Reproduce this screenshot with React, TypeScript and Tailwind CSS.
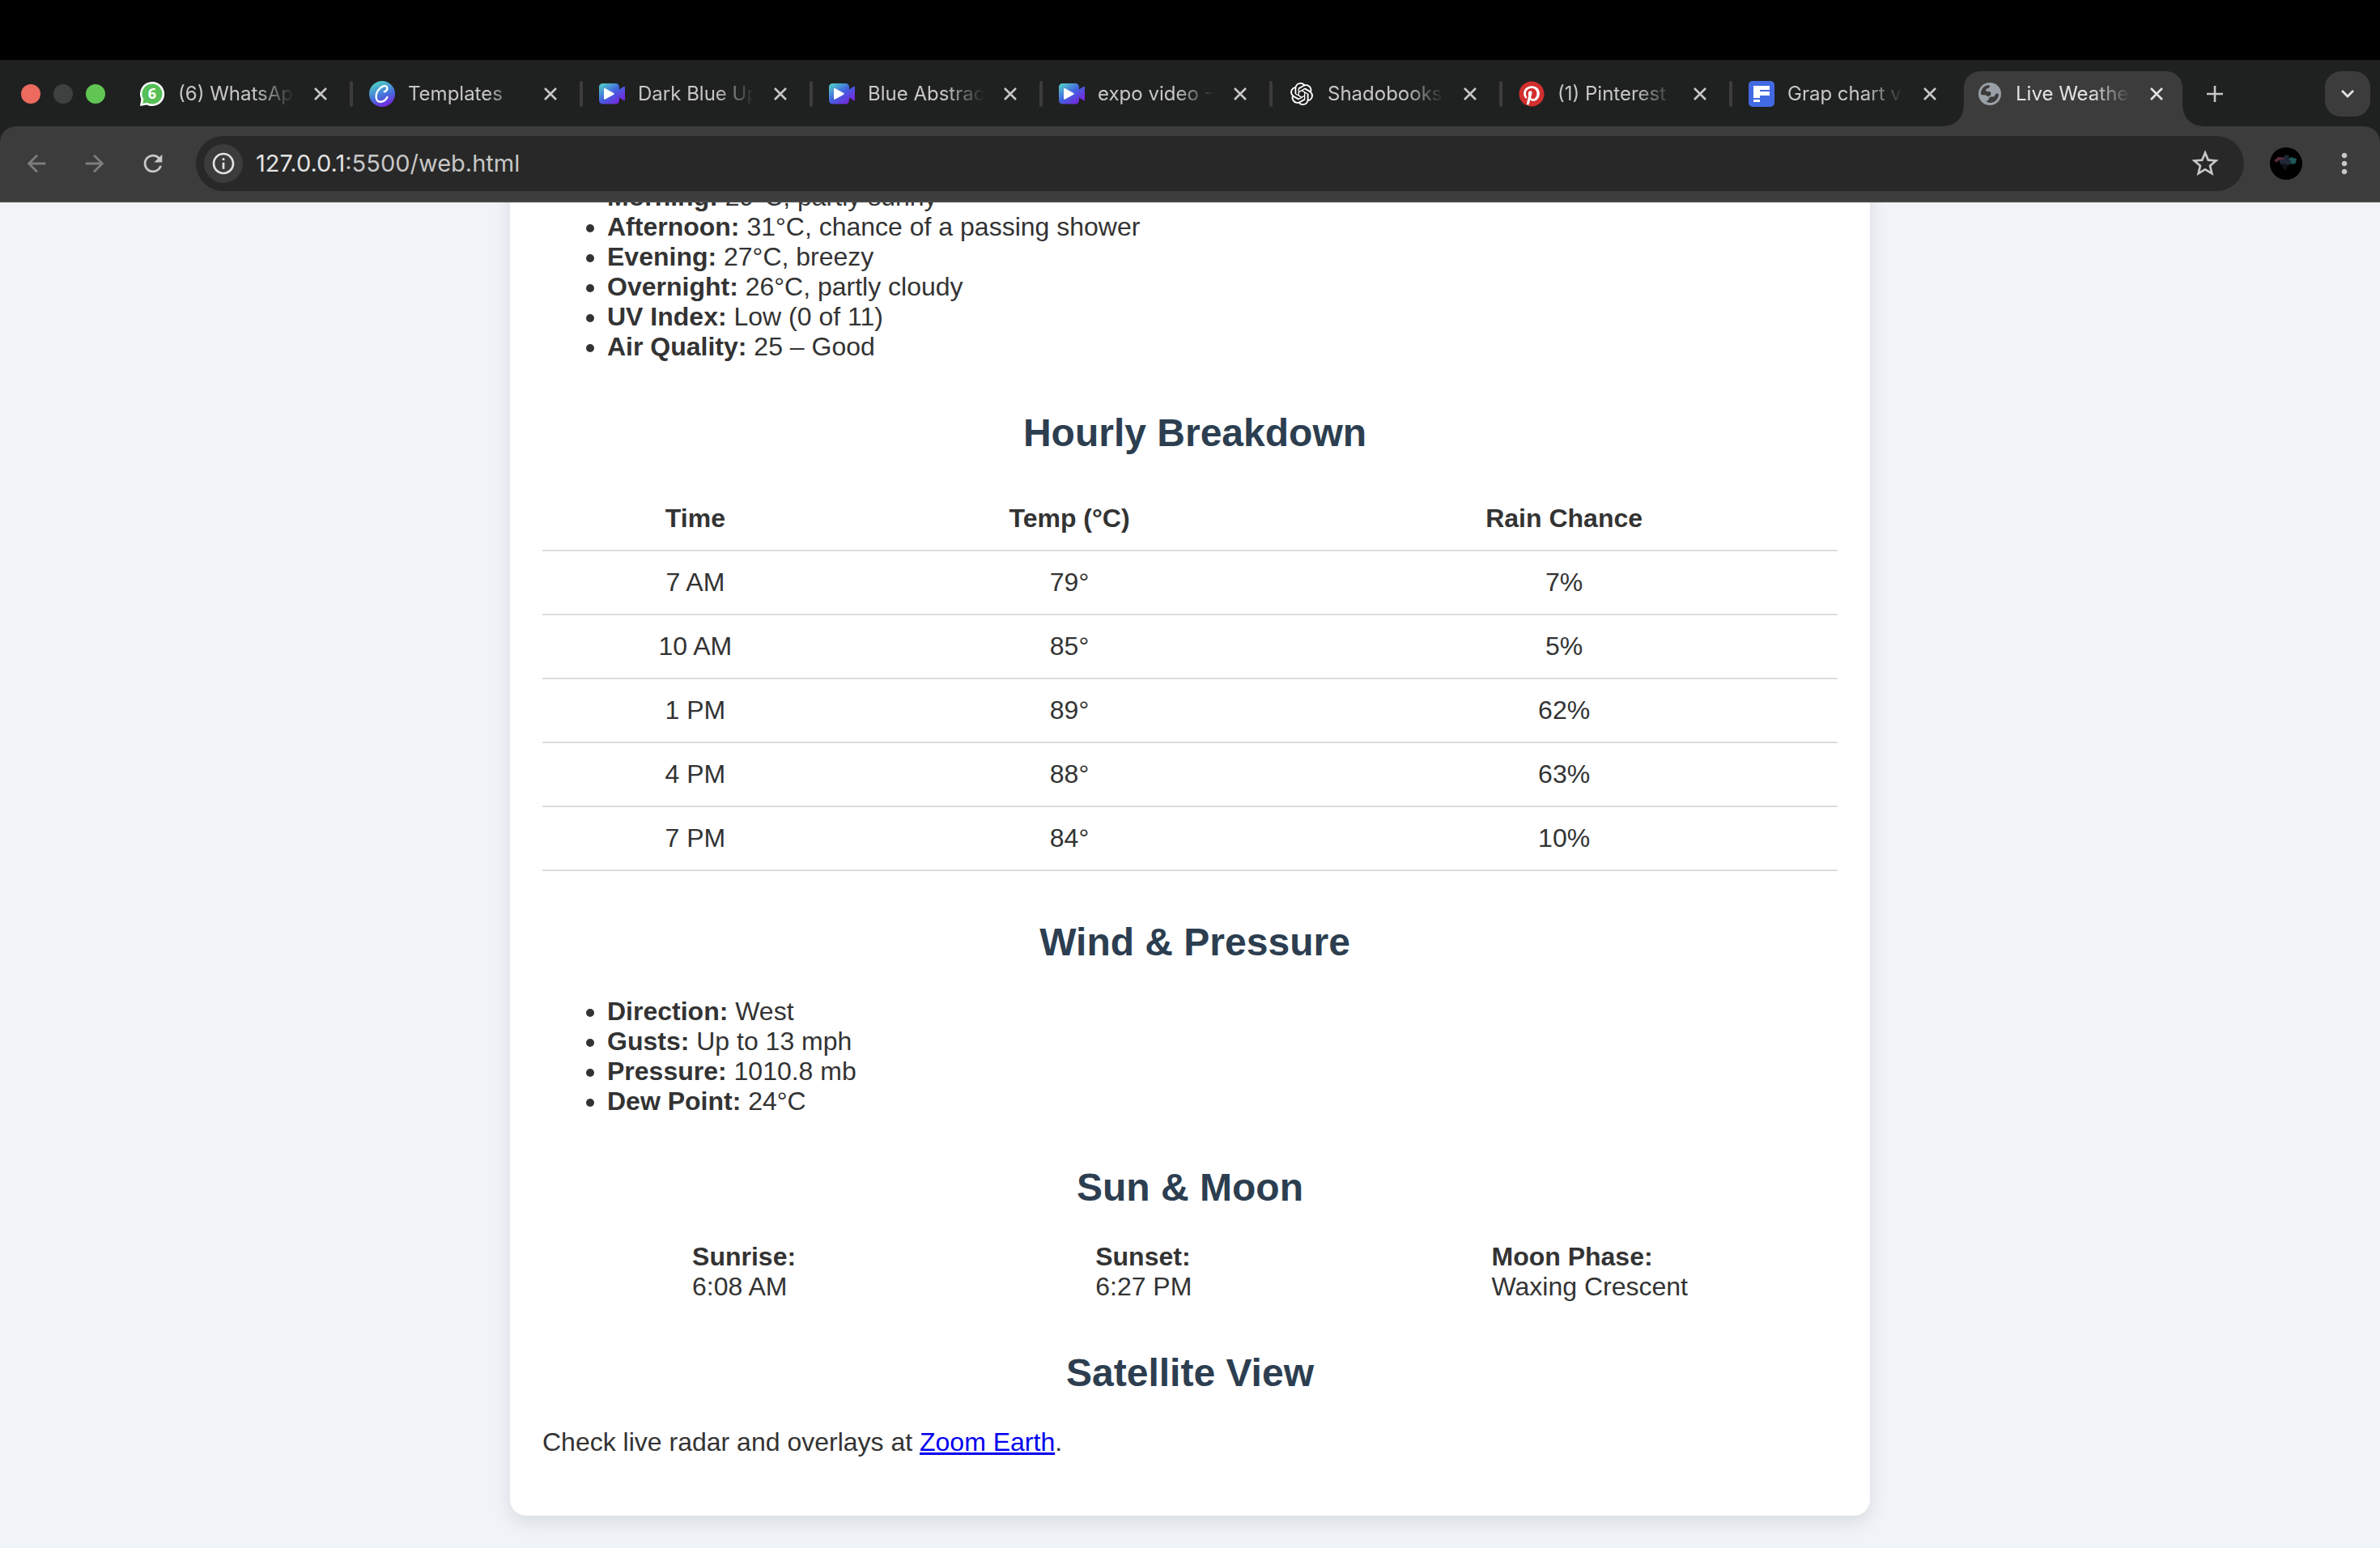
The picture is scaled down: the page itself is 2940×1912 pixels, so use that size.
import React from "react";
import { SiOpenai } from "react-icons/si";
import { FaPinterest } from "react-icons/fa";
import { MdArrowBack, MdArrowForward, MdRefresh, MdInfoOutline, MdStarBorder, MdMoreVert } from "react-icons/md";

function WhatsAppIcon() {
  return (
    <svg viewBox="0 0 32 32" className="size-8" aria-hidden="true">
      <path d="M16 1a15 15 0 1 1-6.6 28.4L1 31l1.400-8.600A15 15 0 0 1 16 1z" fill="#fff" />
      <path d="M16 3.600a12.400 12.400 0 1 1-6.200 23.100L4.200 28l1.100-5.600A12.400 12.400 0 0 1 16 3.600z" fill="#57bf57" />
      <text x="16" y="22" textAnchor="middle" fontSize="18" fontWeight="700" fontFamily="Open Sans, sans-serif" fill="#fff">6</text>
    </svg>
  );
}

function CanvaIcon() {
  return (
    <svg viewBox="0 0 32 32" className="size-8" aria-hidden="true">
      <defs>
        <linearGradient id="canva" x1="0.3" y1="0" x2="0.7" y2="1">
          <stop offset="0.1" stopColor="#4fc1c9" />
          <stop offset="0.55" stopColor="#4472dc" />
          <stop offset="1" stopColor="#7a1fe0" />
        </linearGradient>
      </defs>
      <circle cx="16" cy="16" r="16" fill="url(#canva)" />
      <path
        d="M18.800 13.200c2.200-.4 4.200-3 3.400-5.300C21.400 5.700 18.600 5.700 16 7.100 11.500 9.500 8.600 14.600 8.600 19.400c0 3.700 2 6.300 5.200 6.300 3.600 0 6.800-2.400 8.600-5.600"
        fill="none"
        stroke="#fff"
        strokeWidth="2.400"
        strokeLinecap="round"
      />
    </svg>
  );
}

function VideoIcon() {
  return (
    <svg viewBox="0 0 32 32" className="size-8" aria-hidden="true">
      <defs>
        <linearGradient id="video" x1="0" y1="0" x2="0.9" y2="1">
          <stop offset="0.1" stopColor="#4fc3ca" />
          <stop offset="0.5" stopColor="#4361e0" />
          <stop offset="0.9" stopColor="#7527dc" />
        </linearGradient>
      </defs>
      <path
        d="M4.500 3h16a4.500 4.500 0 0 1 4.500 4.500v3l5.800-3.700q1.200-.5 1.200.7v16q0 1.200-1.200.7L25 20.500v3.500a4.500 4.500 0 0 1-4.500 4.500h-16A4.500 4.500 0 0 1 0 24V7.500A4.500 4.500 0 0 1 4.500 3z"
        fill="url(#video)"
      />
      <path d="M6 10.300q0-2 1.800-1L18.200 15q1.200.8 0 1.700l-10.400 5.800q-1.800 1-1.800-1z" fill="#fff" />
    </svg>
  );
}

function OpenAiIcon() {
  return <SiOpenai className="size-7 text-white" />;
}

function PinterestIcon() {
  return (
    <span className="flex size-8 items-center justify-center rounded-full bg-[radial-gradient(circle,#ffffff_14px,transparent_15px)]">
      <FaPinterest className="size-8 text-[#d22f2f]" />
    </span>
  );
}

function FlourishIcon() {
  return (
    <svg viewBox="0 0 32 32" className="size-8" aria-hidden="true">
      <rect width="32" height="32" rx="5" fill="#4169e1" />
      <path d="M6 6h20v5H14v2h12v5H14v3H6z" fill="#fff" />
      <rect x="6" y="23" width="8" height="3" fill="#fff" />
    </svg>
  );
}

function GlobeIcon() {
  return (
    <svg viewBox="0 0 28 28" className="size-7" aria-hidden="true">
      <circle cx="14" cy="14" r="14" fill="#9aa0a8" />
      <path
        d="M3 15C2.400 8.500 6.500 3.800 12.600 3.100L14 4.200C13.500 6.500 12 7.200 10.500 7.600 8.500 8.400 8.800 10.800 10.600 11h3.200c1.800.6 2 3 1.200 4.600L12.200 17.400 9 15.400z"
        fill="#3c3c3c"
      />
      <path
        d="M9.600 23.200l2.600-1.600c.6-1.800 1-3.200 3-4.200h3.600c1.600-.4 1.400-2.600 2.600-3.400 1.400-.7 2.500-.6 3.500 0 .2 5-3.600 9.800-8.300 10.800-2.500.5-5 .1-7-1.600z"
        fill="#3c3c3c"
      />
    </svg>
  );
}

function CloseIcon() {
  return (
    <svg viewBox="0 0 16 16" className="size-4" fill="none" stroke="currentColor" strokeWidth="2.600" aria-hidden="true">
      <path d="M1 1l14 14M15 1L1 15" />
    </svg>
  );
}

type Tab = { title: string; icon: () => React.ReactElement; active?: boolean };

const tabs: Tab[] = [
  { title: "(6) WhatsApp", icon: WhatsAppIcon },
  { title: "Templates", icon: CanvaIcon },
  { title: "Dark Blue Upload", icon: VideoIcon },
  { title: "Blue Abstract", icon: VideoIcon },
  { title: "expo video - Video", icon: VideoIcon },
  { title: "Shadobooks", icon: OpenAiIcon },
  { title: "(1) Pinterest", icon: PinterestIcon },
  { title: "Grap chart video", icon: FlourishIcon },
  { title: "Live Weather", icon: GlobeIcon, active: true },
];

function TabItem({ tab, divider }: { tab: Tab; divider: boolean }) {
  const Icon = tab.icon;
  return (
    <div
      className={
        tab.active
          ? "relative ml-0.5 flex h-[68px] min-w-0 max-w-[270px] flex-1 rounded-t-[20px] bg-[#3c3c3c] pb-3 text-[#e3e3e3]"
          : "flex h-14 min-w-0 max-w-[284px] flex-1 text-[#c7c7c7]"
      }
    >
      {tab.active && (
        <>
          <span className="absolute -left-6 bottom-0 size-6 bg-[radial-gradient(circle_at_0_0,#1f2120_23px,#3c3c3c_24px)]" />
          <span className="absolute -right-6 bottom-0 size-6 bg-[radial-gradient(circle_at_100%_0,#1f2120_23px,#3c3c3c_24px)]" />
        </>
      )}
      <div className={tab.active ? "flex min-w-0 flex-1 items-center pl-4 pr-3" : "flex min-w-0 flex-1 items-center pl-5 pr-4"}>
        <span className="flex size-8 shrink-0 items-center justify-center">
          <Icon />
        </span>
        <span className="ml-4 mr-3 min-w-0 flex-1 overflow-hidden whitespace-nowrap text-[24px] leading-8 [mask-image:linear-gradient(to_right,black_calc(100%-48px),transparent)]">
          {tab.title}
        </span>
        <button type="button" aria-label={"Close " + tab.title} className="flex size-10 shrink-0 items-center justify-center">
          <CloseIcon />
        </button>
      </div>
      {!tab.active && <span className={divider ? "h-8 w-1 self-center rounded-sm bg-[#3c3c3c]" : "w-1"} />}
    </div>
  );
}

function TabStrip() {
  return (
    <div className="flex bg-[#1f2120] pt-3.5">
      <div className="flex h-14 shrink-0 items-center gap-4 pl-[26px] pr-[22px]">
        <button type="button" aria-label="Close window" className="size-6 rounded-full bg-[#ed6a5e]" />
        <button type="button" aria-label="Minimise window" className="size-6 rounded-full bg-[#3f4140]" />
        <button type="button" aria-label="Zoom window" className="size-6 rounded-full bg-[#61c554]" />
      </div>
      <div className="flex min-w-0 flex-1">
        {tabs.map((tab, i) => (
          <TabItem key={i} tab={tab} divider={i < tabs.length - 2} />
        ))}
        <button type="button" aria-label="New tab" className="ml-3 flex size-14 shrink-0 items-center justify-center text-[#c7c7c7]">
          <svg viewBox="0 0 20 20" className="size-5" stroke="currentColor" strokeWidth="2.600" aria-hidden="true">
            <path d="M10 0v20M0 10h20" />
          </svg>
        </button>
      </div>
      <button type="button" aria-label="Search tabs" className="mr-3 flex size-14 shrink-0 items-center justify-center rounded-[20px] bg-[#3c3c3c] text-[#e3e3e3]">
        <svg viewBox="0 0 18 18" className="size-[18px]" fill="none" stroke="currentColor" strokeWidth="2.800" aria-hidden="true">
          <path d="M2 5l7 7 7-7" />
        </svg>
      </button>
    </div>
  );
}

function Toolbar() {
  return (
    <div className="bg-[#1f2120]">
      <div className="flex h-[94px] items-center rounded-t-[20px] border-b-2 border-[#484848] bg-[#3c3c3c] pl-7 pr-6">
        <div className="flex shrink-0 items-center gap-[38px] pr-9">
          <button type="button" aria-label="Back" className="text-[#7d7d7d]"><MdArrowBack className="size-[34px]" /></button>
          <button type="button" aria-label="Forward" className="text-[#7d7d7d]"><MdArrowForward className="size-[34px]" /></button>
          <button type="button" aria-label="Reload" className="text-[#c7c7c7]"><MdRefresh className="size-[34px]" /></button>
        </div>
        <div className="flex h-[68px] min-w-0 flex-1 items-center rounded-full bg-[#282828] pl-2.5 pr-7">
          <button type="button" aria-label="Site information" className="flex size-12 shrink-0 items-center justify-center rounded-full bg-[#3c3c3c] text-[#e3e3e3]">
            <MdInfoOutline className="size-8" />
          </button>
          <div className="ml-4 flex-1 whitespace-nowrap text-[29px] leading-9 text-[#c7c7c7]">
            <span className="text-[#e3e3e3]">127.0.0.1</span>:5500/web.html
          </div>
          <button type="button" aria-label="Bookmark this page" className="text-[#c7c7c7]"><MdStarBorder className="size-10" /></button>
        </div>
        <button type="button" aria-label="Profile" className="ml-8 size-10 shrink-0 overflow-hidden rounded-full bg-black">
          <svg viewBox="0 0 40 40" className="size-10" aria-hidden="true">
            <path d="M12 14l5-1 2-4 4 1 1 4 4 3-3 4-5 2-6-1-2-4z" fill="#1f2736" />
            <path d="M5 16l3-2 2-2 8 .5-1 2-5 1-4 3z" fill="#5c2a40" />
            <path d="M23 15l3-3 3 1 4 1-1 5-3 2-5-2 3-2z" fill="#205a58" />
            <path d="M14 21l4-1 4 3-2 5-3-1z" fill="#0e1118" />
          </svg>
        </button>
        <button type="button" aria-label="Menu" className="ml-8 shrink-0 text-[#c7c7c7]"><MdMoreVert className="size-10" /></button>
      </div>
    </div>
  );
}

function Heading({ children, indented }: { children: React.ReactNode; indented?: boolean }) {
  return (
    <h2 className={indented ? "mt-15 mb-10 pl-3 text-center text-[48px] leading-[55px] font-bold text-[#2c3e50]" : "mt-15 mb-10 text-center text-[48px] leading-[55px] font-bold text-[#2c3e50]"}>
      {children}
    </h2>
  );
}

function FactList({ items }: { items: string[][] }) {
  return (
    <ul className="list-disc pl-20">
      {items.map(([label, value]) => (
        <li key={label}>
          <strong>{label}:</strong> {value}
        </li>
      ))}
    </ul>
  );
}

const today = [
  ["Morning", "29°C, partly sunny"],
  ["Afternoon", "31°C, chance of a passing shower"],
  ["Evening", "27°C, breezy"],
  ["Overnight", "26°C, partly cloudy"],
  ["UV Index", "Low (0 of 11)"],
  ["Air Quality", "25 – Good"],
];

const hourly = [
  ["7 AM", "79°", "7%"],
  ["10 AM", "85°", "5%"],
  ["1 PM", "89°", "62%"],
  ["4 PM", "88°", "63%"],
  ["7 PM", "84°", "10%"],
];

const wind = [
  ["Direction", "West"],
  ["Gusts", "Up to 13 mph"],
  ["Pressure", "1010.8 mb"],
  ["Dew Point", "24°C"],
];

const sky = [
  ["Sunrise", "6:08 AM"],
  ["Sunset", "6:27 PM"],
  ["Moon Phase", "Waxing Crescent"],
];

export default function App() {
  return (
    <div className="flex h-screen flex-col overflow-hidden bg-[#f0f4f8] font-['Inter',sans-serif]">
      <div className="h-[74px] shrink-0 bg-black" />
      <header className="shrink-0">
        <TabStrip />
        <Toolbar />
      </header>
      <main className="flex min-h-0 flex-1 flex-col justify-end overflow-hidden px-6 pb-10 font-['Liberation_Sans',Arial,sans-serif] text-[32px] leading-[37px] text-[#333333]">
        <article className="mx-auto w-full max-w-[1680px] rounded-[20px] bg-white px-10 pt-10 pb-[72px] shadow-[0_8px_24px_rgba(0,0,0,0.1)]">
          <FactList items={today} />
          <Heading indented>Hourly Breakdown</Heading>
          <table className="w-full border-collapse text-center">
            <thead>
              <tr>
                {["Time", "Temp (°C)", "Rain Chance"].map((h) => (
                  <th key={h} scope="col" className="border-b-2 border-[#dddddd] p-5 font-bold">{h}</th>
                ))}
              </tr>
            </thead>
            <tbody>
              {hourly.map((row) => (
                <tr key={row[0]}>
                  {row.map((cell, i) => (
                    <td key={i} className="border-b-2 border-[#dddddd] p-5">{cell}</td>
                  ))}
                </tr>
              ))}
            </tbody>
          </table>
          <Heading indented>Wind &amp; Pressure</Heading>
          <FactList items={wind} />
          <Heading>Sun &amp; Moon</Heading>
          <div className="flex justify-around">
            {sky.map(([label, value]) => (
              <div key={label}>
                <strong>{label}:</strong>
                <br />
                {value}
              </div>
            ))}
          </div>
          <Heading>Satellite View</Heading>
          <p>
            Check live radar and overlays at <a href="https://zoom.earth" className="text-[#0000ee] underline">Zoom Earth</a>.
          </p>
        </article>
      </main>
    </div>
  );
}
